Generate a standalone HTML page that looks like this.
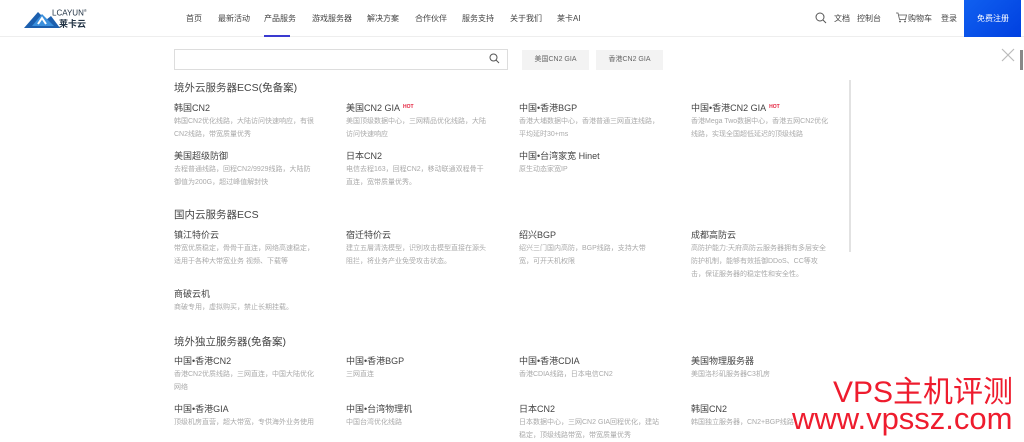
<!DOCTYPE html>
<html><head><meta charset="utf-8"><style>
*{margin:0;padding:0;box-sizing:border-box}
body{width:1024px;height:435px;overflow:hidden;background:#fff;font-family:"Liberation Sans","Noto Sans CJK SC",sans-serif;position:relative;color:#333}
.a{position:absolute;white-space:nowrap}
.hdr{position:absolute;left:0;top:0;width:1024px;height:37px;border-bottom:1px solid #eee;background:#fff}
.nav{font-size:8px;color:#444;top:13px}
.t{font-size:9px;color:#444}
.h{font-size:10.5px;color:#444}
.d{font-size:7px;color:#aaa;line-height:13px;white-space:normal;width:140px}
.hot{color:#e4203c;font-size:5px;font-weight:bold;vertical-align:3px;margin-left:3px}
</style></head><body>
<div class="hdr"></div>
<svg class="a" style="left:24px;top:8px" width="40" height="20" viewBox="0 0 40 20"><path d="M0 20 L14 4 L22 12 L27 8 L36 20Z" fill="#1c5fae"/><path d="M8 18 L18 6 L30 18Z" fill="#3a8fdc"/><path d="M14 16 L18 10 L22 16" fill="none" stroke="#fff" stroke-width="2"/></svg>
<div class="a" style="left:52px;top:8px;font-size:8px;color:#234;letter-spacing:0">LCAYUN<sup style="font-size:4px">®</sup></div>
<div class="a" style="left:59px;top:17px;font-size:9px;color:#234;font-weight:bold">莱卡云</div>
<div class="a nav" style="left:186px">首页</div>
<div class="a nav" style="left:218px">最新活动</div>
<div class="a nav" style="left:264px">产品服务</div>
<div class="a" style="left:264px;top:35px;width:26px;height:2px;background:#3a3ad0"></div>
<div class="a nav" style="left:312px">游戏服务器</div>
<div class="a nav" style="left:367px">解决方案</div>
<div class="a nav" style="left:415px">合作伙伴</div>
<div class="a nav" style="left:462px">服务支持</div>
<div class="a nav" style="left:510px">关于我们</div>
<div class="a nav" style="left:557px">莱卡AI</div>
<svg class="a" style="left:815px;top:12px" width="12" height="12" viewBox="0 0 12 12"><circle cx="5" cy="5" r="4" fill="none" stroke="#555" stroke-width="1"/><path d="M8 8 L11 11" stroke="#555" stroke-width="1"/></svg>
<div class="a nav" style="left:834px">文档</div>
<div class="a nav" style="left:857px">控制台</div>
<svg class="a" style="left:896px;top:12px" width="11" height="11" viewBox="0 0 11 11"><path d="M0 1 H2 L3.5 7.5 H9.5 L10.5 3 H3" fill="none" stroke="#555" stroke-width="0.8"/><circle cx="4" cy="9.5" r="0.9" fill="#555"/><circle cx="9" cy="9.5" r="0.9" fill="#555"/></svg>
<div class="a nav" style="left:908px">购物车</div>
<div class="a nav" style="left:941px">登录</div>
<div class="a" style="left:964px;top:0;width:57px;height:37px;background:linear-gradient(135deg,#1060f0,#0040e0)"></div>
<div class="a nav" style="left:977px;color:#fff">免费注册</div>
<div class="a" style="left:174px;top:49px;width:334px;height:21px;border:1px solid #ddd"></div>
<svg class="a" style="left:489px;top:53px" width="11" height="11" viewBox="0 0 11 11"><circle cx="4.5" cy="4.5" r="3.5" fill="none" stroke="#555" stroke-width="1"/><path d="M7 7 L10 10" stroke="#555" stroke-width="1"/></svg>
<div class="a" style="left:522px;top:50px;width:67px;height:20px;background:#f3f3f3;font-size:7px;color:#666;text-align:center;line-height:20px">美国CN2 GIA</div>
<div class="a" style="left:596px;top:50px;width:67px;height:20px;background:#f3f3f3;font-size:7px;color:#666;text-align:center;line-height:20px">香港CN2 GIA</div>
<svg class="a" style="left:1001px;top:48px" width="14" height="14" viewBox="0 0 14 14"><path d="M1 1 L13 13 M13 1 L1 13" stroke="#bbb" stroke-width="1.2"/></svg>
<div class="a" style="left:1020px;top:50px;width:3px;height:20px;background:#888"></div>
<div class="a" style="left:849px;top:80px;width:2px;height:172px;background:#e2e2e2"></div>

<div class="a h" style="left:174px;top:80px">境外云服务器ECS(免备案)</div>
<div class="a t" style="left:174px;top:101px">韩国CN2</div>
<div class="a d" style="left:174px;top:115px">韩国CN2优化线路，大陆访问快速响应，有很CN2线路，带宽质量优秀</div>
<div class="a t" style="left:346px;top:101px">美国CN2 GIA<span class="hot">HOT</span></div>
<div class="a d" style="left:346px;top:115px">美国顶级数据中心，三网精品优化线路，大陆访问快速响应</div>
<div class="a t" style="left:519px;top:101px">中国•香港BGP</div>
<div class="a d" style="left:519px;top:115px">香港大埔数据中心，香港普通三网直连线路，平均延时30+ms</div>
<div class="a t" style="left:691px;top:101px">中国•香港CN2 GIA<span class="hot">HOT</span></div>
<div class="a d" style="left:691px;top:115px">香港Mega Two数据中心，香港五网CN2优化线路，实现全国超低延迟的顶级线路</div>
<div class="a t" style="left:174px;top:149px">美国超级防御</div>
<div class="a d" style="left:174px;top:163px">去程普通线路，回程CN2/9929线路，大陆防御值为200G，超过峰值解封快</div>
<div class="a t" style="left:346px;top:149px">日本CN2</div>
<div class="a d" style="left:346px;top:163px">电信去程163，回程CN2，移动联通双程骨干直连，宽带质量优秀。</div>
<div class="a t" style="left:519px;top:149px">中国•台湾家宽 Hinet</div>
<div class="a d" style="left:519px;top:163px">原生动态家宽IP</div>

<div class="a h" style="left:174px;top:207px">国内云服务器ECS</div>
<div class="a t" style="left:174px;top:228px">镇江特价云</div>
<div class="a d" style="left:174px;top:242px">带宽优质稳定，骨骨干直连，网络高速稳定，适用于各种大带宽业务 视频、下载等</div>
<div class="a t" style="left:346px;top:228px">宿迁特价云</div>
<div class="a d" style="left:346px;top:242px">建立五層清洗模型，识别攻击模型直接在源头阻拦，将业务产业免受攻击状态。</div>
<div class="a t" style="left:519px;top:228px">绍兴BGP</div>
<div class="a d" style="left:519px;top:242px">绍兴三门国内高防，BGP线路，支持大带宽，可开天机权限</div>
<div class="a t" style="left:691px;top:228px">成都高防云</div>
<div class="a d" style="left:691px;top:242px">高防护能力:天府高防云服务器拥有多层安全防护机制，能够有效抵御DDoS、CC等攻击，保证服务器的稳定性和安全性。</div>
<div class="a t" style="left:174px;top:287px">商破云机</div>
<div class="a d" style="left:174px;top:301px">商破专用，虚拟购买，禁止长期挂载。</div>

<div class="a h" style="left:174px;top:334px">境外独立服务器(免备案)</div>
<div class="a t" style="left:174px;top:354px">中国•香港CN2</div>
<div class="a d" style="left:174px;top:368px">香港CN2优质线路，三网直连，中国大陆优化网络</div>
<div class="a t" style="left:346px;top:354px">中国•香港BGP</div>
<div class="a d" style="left:346px;top:368px">三网直连</div>
<div class="a t" style="left:519px;top:354px">中国•香港CDIA</div>
<div class="a d" style="left:519px;top:368px">香港CDIA线路，日本电信CN2</div>
<div class="a t" style="left:691px;top:354px">美国物理服务器</div>
<div class="a d" style="left:691px;top:368px">美国洛杉矶服务器C3机房</div>
<div class="a t" style="left:174px;top:402px">中国•香港GIA</div>
<div class="a d" style="left:174px;top:416px">顶级机房直营，超大带宽，专供海外业务使用</div>
<div class="a t" style="left:346px;top:402px">中国•台湾物理机</div>
<div class="a d" style="left:346px;top:416px">中国台湾优化线路</div>
<div class="a t" style="left:519px;top:402px">日本CN2</div>
<div class="a d" style="left:519px;top:416px">日本数据中心，三网CN2 GIA回程优化，建站稳定，顶级线路带宽，带宽质量优秀</div>
<div class="a t" style="left:691px;top:402px">韩国CN2</div>
<div class="a d" style="left:691px;top:416px">韩国独立服务器，CN2+BGP线路</div>

<div class="a" style="left:833px;top:377px;font-size:30px;color:#ee1c2e;line-height:32px">VPS主机评测</div>
<div class="a" style="left:792px;top:403px;font-size:31px;color:#ee1c2e;line-height:32px">www.vpssz.com</div>
</body></html>
